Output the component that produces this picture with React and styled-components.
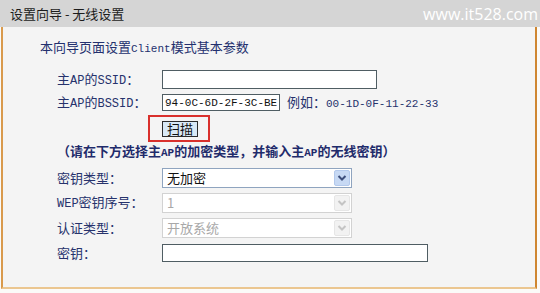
import React from 'react'
import styled, { createGlobalStyle } from 'styled-components'

const GlobalStyle = createGlobalStyle`
  body {
    margin: 0;
    background: #fbfaf8;
    font-family: "Noto Sans CJK SC", sans-serif;
  }
`

const Chevron = ({ color }) => (
  <svg width="10" height="8" viewBox="0 0 10 8">
    <path d="M1.5 2 L5 5.5 L8.5 2" fill="none" stroke={color} strokeWidth="2" />
  </svg>
)

const App = () => {
  return (
    <Page>
      <GlobalStyle />
      <Header>
        <Title>设置向导 - 无线设置</Title>
        <Watermark>www.it528.com</Watermark>
      </Header>
      <Panel>
        <Intro>本向导页面设置<Lat>Client</Lat>模式基本参数</Intro>
        <Form>
          <Row h={23}>
            <Label>主<Lat size={12}>AP</Lat>的<Lat size={12}>SSID</Lat>：</Label>
            <TextInput w={215} hgt={19} readOnly value="" />
          </Row>
          <Row h={23}>
            <Label>主<Lat size={12}>AP</Lat>的<Lat size={12}>BSSID</Lat>：</Label>
            <TextInput w={118} hgt={17} readOnly value="94-0C-6D-2F-3C-BE" />
            <Example>例如：<Lat>00-1D-0F-11-22-33</Lat></Example>
          </Row>
          <Row h={29}>
            <Label />
            <Highlight>
              <ScanButton>扫描</ScanButton>
            </Highlight>
          </Row>
          <Note>（请在下方选择主<Lat>AP</Lat>的加密类型，并输入主<Lat>AP</Lat>的无线密钥）</Note>
          <Row h={25}>
            <Label>密钥类型：</Label>
            <SelectBox>
              <SelectText>无加密</SelectText>
              <ArrowBtn><Chevron color="#3d4f7c" /></ArrowBtn>
            </SelectBox>
          </Row>
          <Row h={25}>
            <Label><Lat size={12}>WEP</Lat>密钥序号：</Label>
            <SelectBox disabled>
              <SelectText disabled>1</SelectText>
              <ArrowBtn disabled><Chevron color="#c4c4c4" /></ArrowBtn>
            </SelectBox>
          </Row>
          <Row h={25}>
            <Label>认证类型：</Label>
            <SelectBox disabled>
              <SelectText disabled>开放系统</SelectText>
              <ArrowBtn disabled><Chevron color="#c4c4c4" /></ArrowBtn>
            </SelectBox>
          </Row>
          <Row h={25}>
            <Label>密钥：</Label>
            <TextInput w={266} hgt={18} readOnly value="" />
          </Row>
        </Form>
      </Panel>
    </Page>
  )
}

export default App

// Styled Components
const Page = styled.div`
  width: 540px;
  height: 293px;
  overflow: hidden;
`

const Header = styled.div`
  height: 27px;
  background: #d5d5d5;
  display: flex;
  align-items: center;
  justify-content: space-between;
  padding: 0 2px 0 10px;
`

const Title = styled.span`
  font-size: 13px;
  color: #1c1c1c;
  line-height: 1;
`

const Watermark = styled.span`
  font-family: "Open Sans", sans-serif;
  font-size: 16px;
  color: #ffffff;
  line-height: 1;
`

const Panel = styled.div`
  margin: 0 3px 0 1px;
  border-left: 2px solid #d99a4c;
  border-right: 2px solid #cf8631;
  border-bottom: 2px solid #ebc690;
  background: #f4f4f4;
  padding: 10px 0 22px 0;
`

const Lat = styled.span`
  font-family: "Liberation Mono", monospace;
  font-size: ${p => p.size || 11}px;
`

const Intro = styled.div`
  height: 20px;
  line-height: 20px;
  padding-left: 37px;
  font-size: 13px;
  color: #23306e;
`

const Form = styled.div`
  margin-top: 11px;
  padding-left: 54px;
  display: flex;
  flex-direction: column;
`

const Row = styled.div`
  height: ${p => p.h}px;
  display: flex;
  align-items: center;
`

const Label = styled.div`
  width: 105px;
  flex-shrink: 0;
  font-size: 13px;
  color: #26326c;
  line-height: 1;
`

const TextInput = styled.input`
  box-sizing: border-box;
  width: ${p => p.w}px;
  height: ${p => p.hgt}px;
  margin: 0;
  padding: 0 0 0 2px;
  border: 1px solid #4f5d63;
  background: #ffffff;
  font-family: "Liberation Mono", monospace;
  font-size: 11px;
  color: #111;
  outline: none;
`

const Example = styled.span`
  margin-left: 7px;
  font-size: 13px;
  color: #26326c;
  line-height: 1;
`

const Highlight = styled.div`
  margin-left: -14px;
  padding: 4px 10px 3px 12px;
  border: 2px solid #d9302c;
  display: flex;
`

const ScanButton = styled.div`
  box-sizing: border-box;
  width: 36px;
  height: 16px;
  border: 1px solid #2c2c2c;
  background: #d9e9f6;
  font-size: 13px;
  line-height: 14px;
  text-align: center;
  color: #111;
`

const Note = styled.div`
  height: 16px;
  margin-bottom: 6px;
  font-size: 13px;
  line-height: 16px;
  font-weight: 700;
  color: #1f2b6b;
  white-space: nowrap;
`

const SelectBox = styled.div`
  box-sizing: border-box;
  width: 190px;
  height: 20px;
  display: flex;
  align-items: center;
  justify-content: space-between;
  padding: 0 1px 0 4px;
  border: 1px solid ${p => (p.disabled ? '#d2d2d2' : '#8fa4bf')};
  background: #ffffff;
`

const SelectText = styled.span`
  font-size: 13px;
  line-height: 1;
  color: ${p => (p.disabled ? '#a8a8a8' : '#111')};
`

const ArrowBtn = styled.div`
  width: 16px;
  height: 16px;
  display: flex;
  align-items: center;
  justify-content: center;
  border-radius: 2px;
  background: ${p => (p.disabled ? '#f2f2f2' : '#c7d9f4')};
  border: 1px solid ${p => (p.disabled ? '#e6e6e6' : '#b3c9ec')};
  box-sizing: border-box;
`
